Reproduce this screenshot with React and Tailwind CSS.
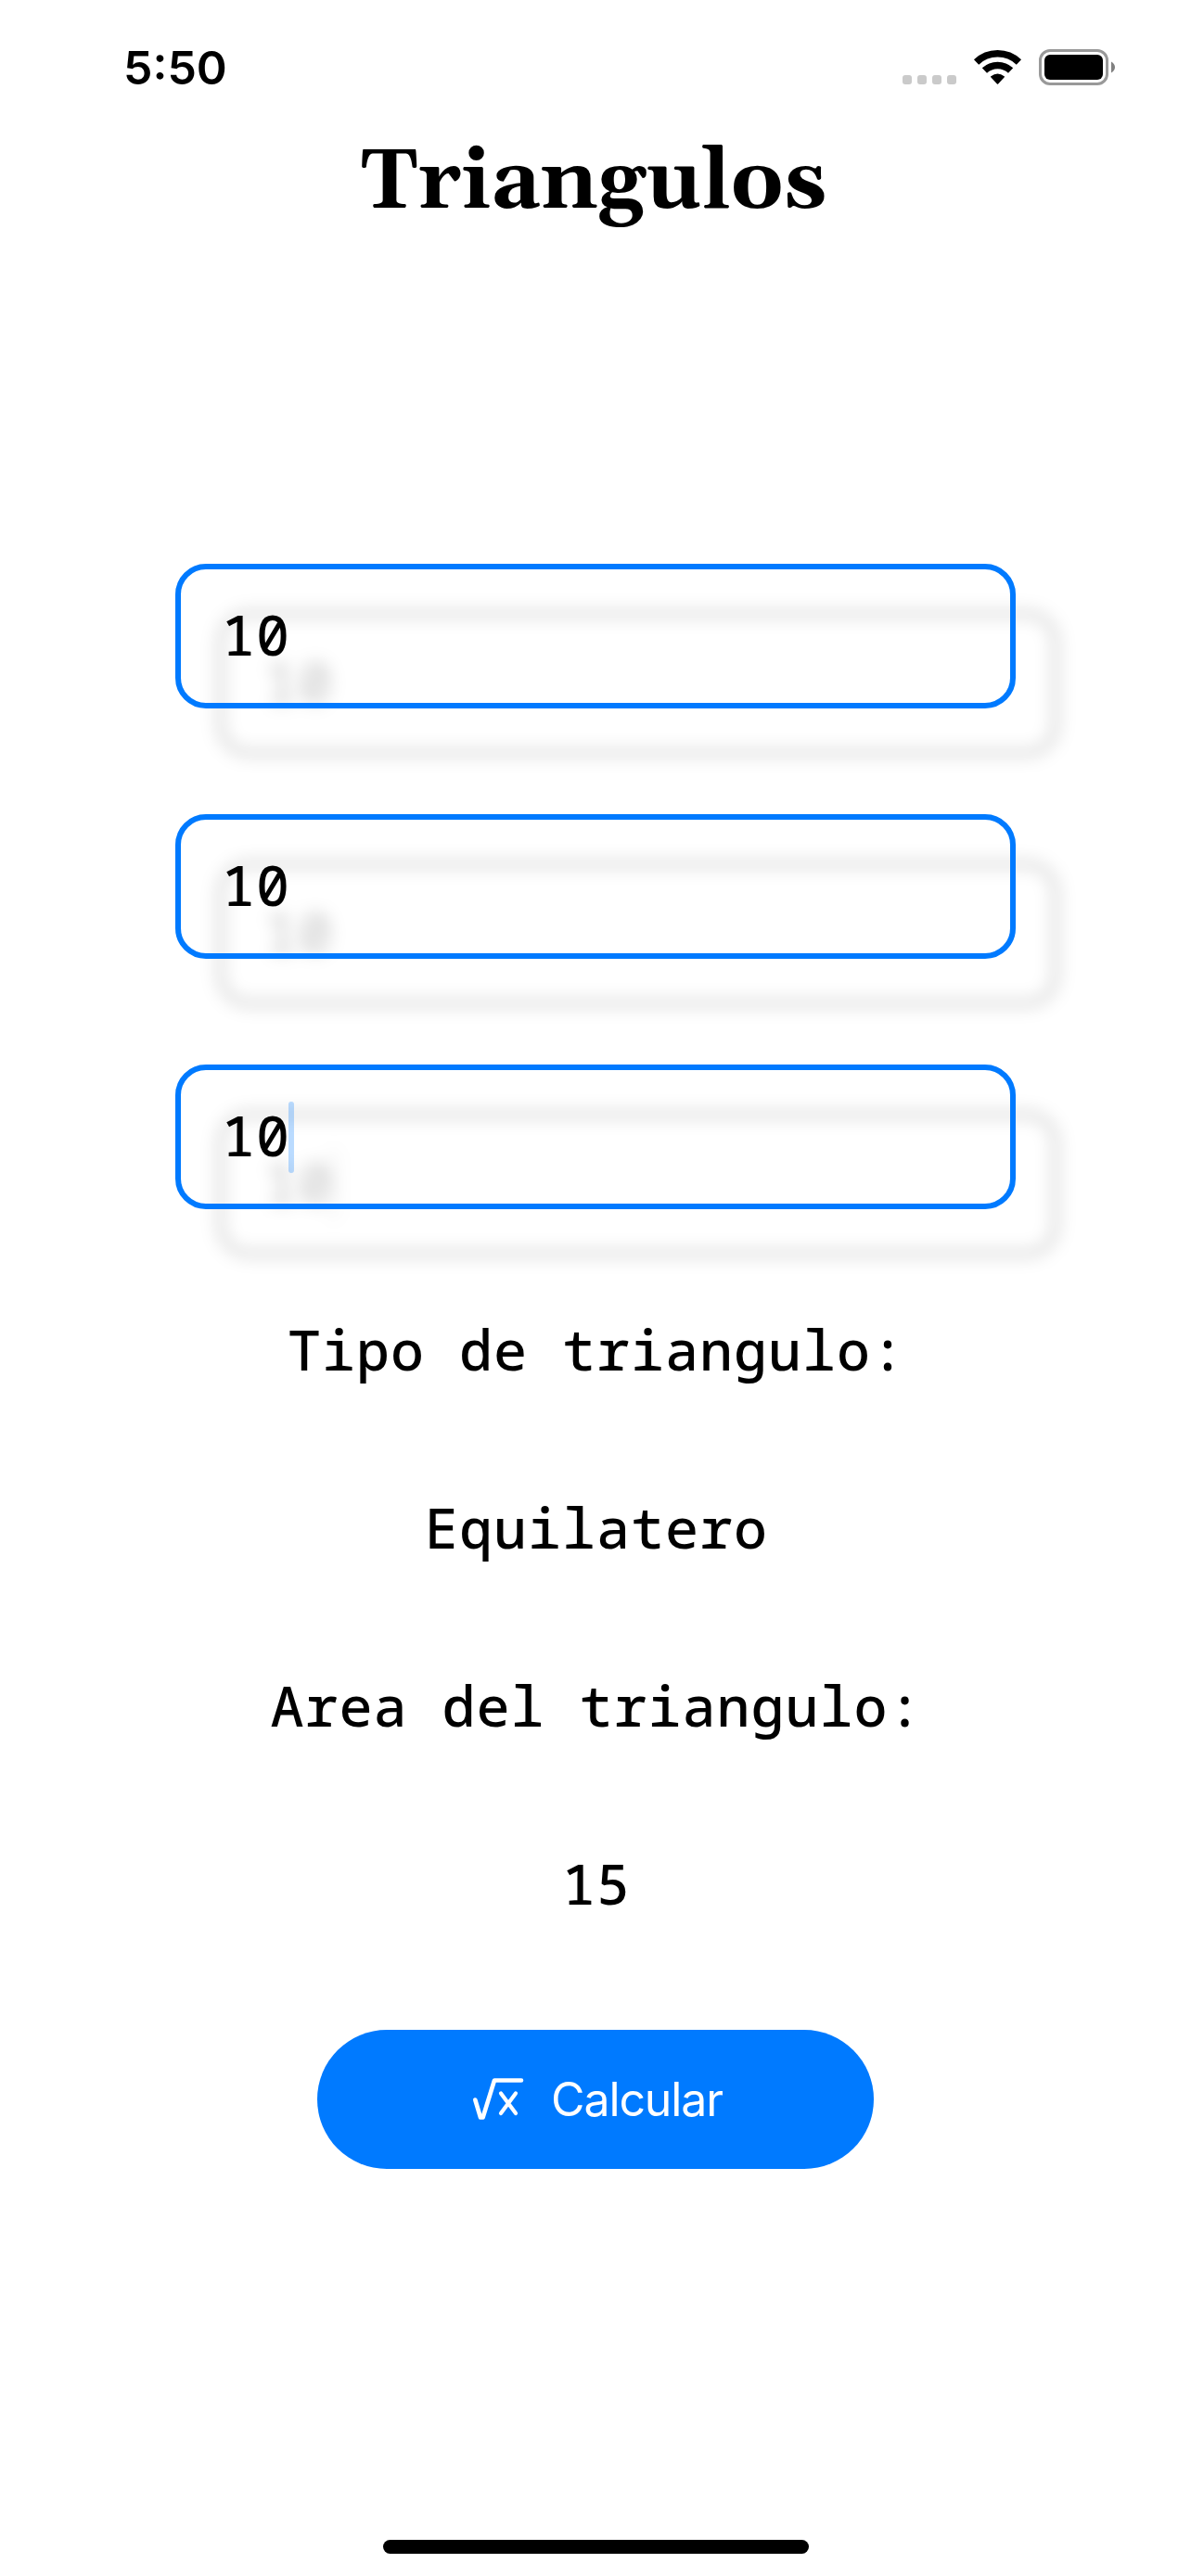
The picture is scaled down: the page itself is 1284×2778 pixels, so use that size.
const rows = ["Tipo de triangulo:", "Equilatero", "Area del triangulo:", "15"];

function StatusBar() {
  return (
    <div className="flex h-[146px] items-start justify-between pr-[82px] pl-[133px] font-[Inter,sans-serif]">
      <span className="mt-[43px] text-[50px] leading-[60px] font-semibold">5:50</span>
      <svg className="mt-[50px] h-[45px] w-[230px]" viewBox="972 50 230 45" fill="none">
        {[973, 989, 1005, 1021].map((x) => (
          <rect key={x} x={x} y="81" width="10" height="10" rx="3" fill="#cacaca" />
        ))}
        <path d="M1052.6 66.9A33.2 33.2 0 0 1 1098.4 66.9" stroke="#000" strokeWidth="7.6" />
        <path d="M1061.4 76.1A20.5 20.5 0 0 1 1089.6 76.1" stroke="#000" strokeWidth="7.6" />
        <path d="M1075.5 90L1068.8 82.8Q1075.5 78 1082.2 82.8Z" fill="#000" stroke="#000" strokeWidth="1.6" strokeLinejoin="round" />
        <rect x="1121.5" y="54.5" width="72" height="36" rx="10.5" stroke="#999" strokeWidth="3" />
        <rect x="1126" y="59" width="63" height="27" rx="6" fill="#000" />
        <path d="M1198 66.5Q1202 69 1202 72.5T1198 78.5Z" fill="#808080" />
      </svg>
    </div>
  );
}

function Field({ value, focused }) {
  return (
    <div className="flex h-[156px] w-[906px] items-center rounded-[33px] border-6 border-[#007aff] pl-[44px] drop-shadow-[46px_51px_9px_rgba(0,0,0,0.2)]">
      <span className="-mt-[4px] w-[72px] text-[60px] leading-[76px] font-medium tracking-[1px] whitespace-nowrap">{value}</span>
      {focused && <span className="h-[77px] w-[6px] rounded-[3px] bg-[#007aff]/27" />}
    </div>
  );
}

export default function App() {
  return (
    <main className="flex h-[2778px] w-[1284px] flex-col bg-white font-['Noto_Sans_Mono','Liberation_Mono',monospace] text-black">
      <StatusBar />
      <h1 className="mt-[5px] h-[94px] pr-[4px] text-center font-['Gelasio','Liberation_Serif',serif] text-[89.8px] leading-[94px] font-bold">
        Triangulos
      </h1>
      <section className="mt-[363px] flex flex-col items-center gap-[114px]">
        <Field value="10" />
        <Field value="10" />
        <Field value="10" focused />
      </section>
      <section className="mt-[55px] pl-[2px] text-center text-[60px] leading-[192px] font-medium tracking-[1px]">
        {rows.map((r) => (
          <p key={r}>{r}</p>
        ))}
      </section>
      <button className="mt-[62px] ml-[342px] flex h-[150px] w-[600px] items-center rounded-full bg-[#007aff] pl-[166px] font-[Inter,sans-serif] text-[50px] text-white">
        <svg className="mr-[28px] h-[48px] w-[58px]" viewBox="508 2240 58 48" fill="none" stroke="currentColor" strokeWidth="4.6" strokeLinecap="round" strokeLinejoin="round">
          <path d="M512.3 2264.5L518 2283.5H520.6L533 2243.5H562" />
          <path d="M540 2257.500L556 2279M556 2257.500L540 2279" strokeWidth="4.2" />
        </svg>
        <span className="tracking-[-1.1px]">Calcular</span>
      </button>
      <div className="mt-auto mb-[24px] ml-[413px] h-[15px] w-[459px] rounded-full bg-black" />
    </main>
  );
}
